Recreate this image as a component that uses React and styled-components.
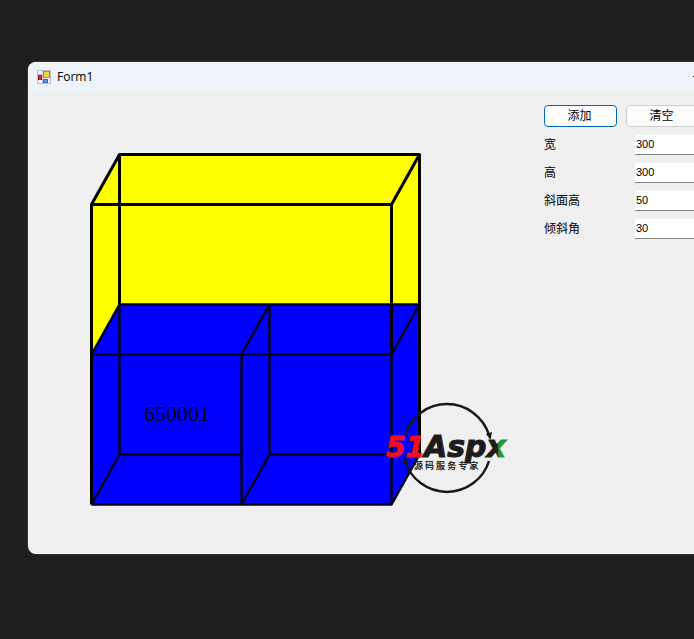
import React from "react";
import styled, { createGlobalStyle } from "styled-components";

const GlobalStyle = createGlobalStyle`
  *, *::before, *::after { box-sizing: border-box; }
  body {
    margin: 0;
    background: #1e1e1e;
    color: #000;
    font-family: "Liberation Sans", "Noto Sans CJK SC", sans-serif;
    font-size: 12px;
  }
`;

const Desktop = styled.div`
  min-height: 100vh;
  padding: 62px 0 62px 28px;
  overflow: hidden;
`;

/* The window runs past the right edge of the desktop. */
const Window = styled.main`
  margin-right: -118px;
  border-radius: 8px;
  overflow: hidden;
  background: #f0f0f0;
  box-shadow: 0 0 0 1px #333;
`;

const TitleBar = styled.header`
  display: flex;
  align-items: center;
  height: 30px;
  padding-left: 9px;
  background: linear-gradient(#edf3f8, #eff3fa);
`;

const Title = styled.h1`
  flex: 1;
  margin: 0 0 0 6px;
  font: 400 12px/16px "Open Sans", "Noto Sans", sans-serif;
`;

const CaptionButton = styled.button`
  display: grid;
  place-items: center;
  width: 46px;
  height: 30px;
  padding: 0;
  border: 0;
  background: transparent;
`;

const Body = styled.div`
  display: grid;
  grid-template-columns: minmax(0, 1fr) 268px;
`;

const Canvas = styled.section`
  position: relative;
  padding: 61px 0 48px 62px;
`;

const Drawing = styled.svg`
  display: block;
`;

const Watermark = styled.svg`
  position: absolute;
  left: 356px;
  top: 308px;
`;

const Panel = styled.form`
  display: flex;
  flex-direction: column;
  gap: 8px;
  padding-top: 13px;
`;

const ButtonRow = styled.div`
  display: flex;
  gap: 9px;
`;

const Button = styled.button`
  width: 73px;
  height: 22px;
  padding: 0 2px 2px 0;
  border: 1px solid ${(p) => (p.$primary ? "#0067b8" : "#d0d0d0")};
  border-radius: 4px;
  background: #fdfdfd;
  color: #000;
  font: 12px/18px "Noto Sans CJK SC", sans-serif;
`;

const Field = styled.div`
  display: grid;
  grid-template-columns: 91px 100px;
  align-items: center;
  height: 20px;
`;

const Label = styled.label`
  padding-bottom: 2px;
  font: 12px/18px "Noto Sans CJK SC", sans-serif;
`;

const TextBox = styled.input`
  width: 100%;
  height: 20px;
  padding: 0 1px 2px;
  border: 0;
  border-bottom: 1px solid #868686;
  background: #fff;
  color: #000;
  font: 11px "Liberation Sans", sans-serif;
`;

const fields = [
  { id: "width", label: "宽", value: "300" },
  { id: "height", label: "高", value: "300" },
  { id: "bevel", label: "斜面高", value: "50" },
  { id: "angle", label: "倾斜角", value: "30" },
];

function FormIcon() {
  return (
    <svg width="14" height="14" viewBox="0 0 14 14" aria-hidden="true">
      <rect x="0.5" y="0.5" width="13" height="13" fill="#f3f5fb" stroke="#b9bfd6" />
      <path d="M1 4.5h12M5.5 1v12" stroke="#c5cade" />
      <rect x="6.5" y="1.5" width="6" height="6" fill="#f8cf3f" stroke="#c08a10" />
      <rect x="1.5" y="5.5" width="3" height="4" fill="#e23b2e" stroke="#a01818" />
      <rect x="6.5" y="9.5" width="4" height="3" fill="#5c9bea" stroke="#2c62c0" />
    </svg>
  );
}

function BoxDrawing() {
  return (
    <Drawing width="332" height="353" viewBox="90 153 332 353" role="img" aria-label="650001">
      <path d="M91.5 204.5 119.5 154.5H419.5V304.5L391.5 354.5H91.5Z" fill="#ff0" />
      <path d="M91.5 354.5 119.5 304.5H419.5V454.5L391.5 504.5H91.5Z" fill="#00f" />
      <g fill="none" stroke="#000" strokeLinejoin="round">
        <path
          d="M91.5 354.5V204.5L119.5 154.5H419.5L391.5 204.5H91.5M119.5 154.5V304.5M391.5 204.5V354.5M419.5 154.5V454.5M91.5 354.5V504.5"
          strokeWidth="3"
        />
        <path
          d="M91.5 354.5 119.5 304.5H419.5L391.5 354.5H91.5M91.5 504.5H391.5V354.5M391.5 504.5 419.5 454.5M119.5 304.5V454.5M119.5 454.5 91.5 504.5M119.5 454.5H241.5M241.5 354.5V504.5M241.5 354.5 269.5 304.5V454.5L241.5 504.5M269.5 454.5H391.5"
          stroke="#000018"
          strokeWidth="2.5"
        />
      </g>
      <text x="144" y="421" fontFamily='"Liberation Serif", serif' fontSize="22" fill="#000018">
        650001
      </text>
    </Drawing>
  );
}

function AspxWatermark() {
  return (
    <Watermark width="132" height="96" viewBox="384 400 132 96" role="img" aria-label="51Aspx 源码服务专家">
      <defs>
        <linearGradient id="xFill" gradientUnits="userSpaceOnUse" x1="497" y1="0" x2="499" y2="0">
          <stop offset="0" stopColor="#1c1c1c" />
          <stop offset="1" stopColor="#1f9a2e" />
        </linearGradient>
      </defs>
      <g fill="none" stroke="#181818" strokeWidth="2.5">
        <path d="M405 435A44 44 0 0 1 489 435" />
        <path d="M405 461A44 44 0 0 0 489 461" />
      </g>
      <path d="M486 434 492 432 490.5 440Z" fill="#181818" />
      <path d="M409 462 402 464 404 457Z" fill="#181818" />
      <g fontFamily='"DejaVu Sans", sans-serif' fontWeight="700" fontStyle="italic" fontSize="28">
        <text x="386" y="457" fill="#ee1020" stroke="#ee1020">51</text>
        <text x="424" y="457" fill="url(#xFill)" stroke="url(#xFill)" fontSize="30">Aspx</text>
      </g>
      <text x="414" y="469" fontFamily='"Noto Sans CJK SC", sans-serif' fontWeight="700" fontSize="9" fill="#2a2a2a">
        源 码 服 务 专 家
      </text>
    </Watermark>
  );
}

export default function App() {
  return (
    <>
      <GlobalStyle />
      <Desktop>
        <Window>
          <TitleBar>
            <FormIcon />
            <Title>Form1</Title>
            <CaptionButton type="button" aria-label="Minimize">
              <svg width="10" height="10"><path d="M1 4.5H10" stroke="#000" /></svg>
            </CaptionButton>
            <CaptionButton type="button" aria-label="Maximize">
              <svg width="10" height="10"><rect x="0.5" y="0.5" width="9" height="9" fill="none" stroke="#000" /></svg>
            </CaptionButton>
            <CaptionButton type="button" aria-label="Close">
              <svg width="10" height="10"><path d="M0 0 10 10M10 0 0 10" stroke="#000" /></svg>
            </CaptionButton>
          </TitleBar>
          <Body>
            <Canvas>
              <BoxDrawing />
              <AspxWatermark />
            </Canvas>
            <Panel>
              <ButtonRow>
                <Button type="button" $primary>添加</Button>
                <Button type="button">清空</Button>
              </ButtonRow>
              {fields.map((f) => (
                <Field key={f.id}>
                  <Label htmlFor={f.id}>{f.label}</Label>
                  <TextBox id={f.id} type="text" defaultValue={f.value} />
                </Field>
              ))}
            </Panel>
          </Body>
        </Window>
      </Desktop>
    </>
  );
}
